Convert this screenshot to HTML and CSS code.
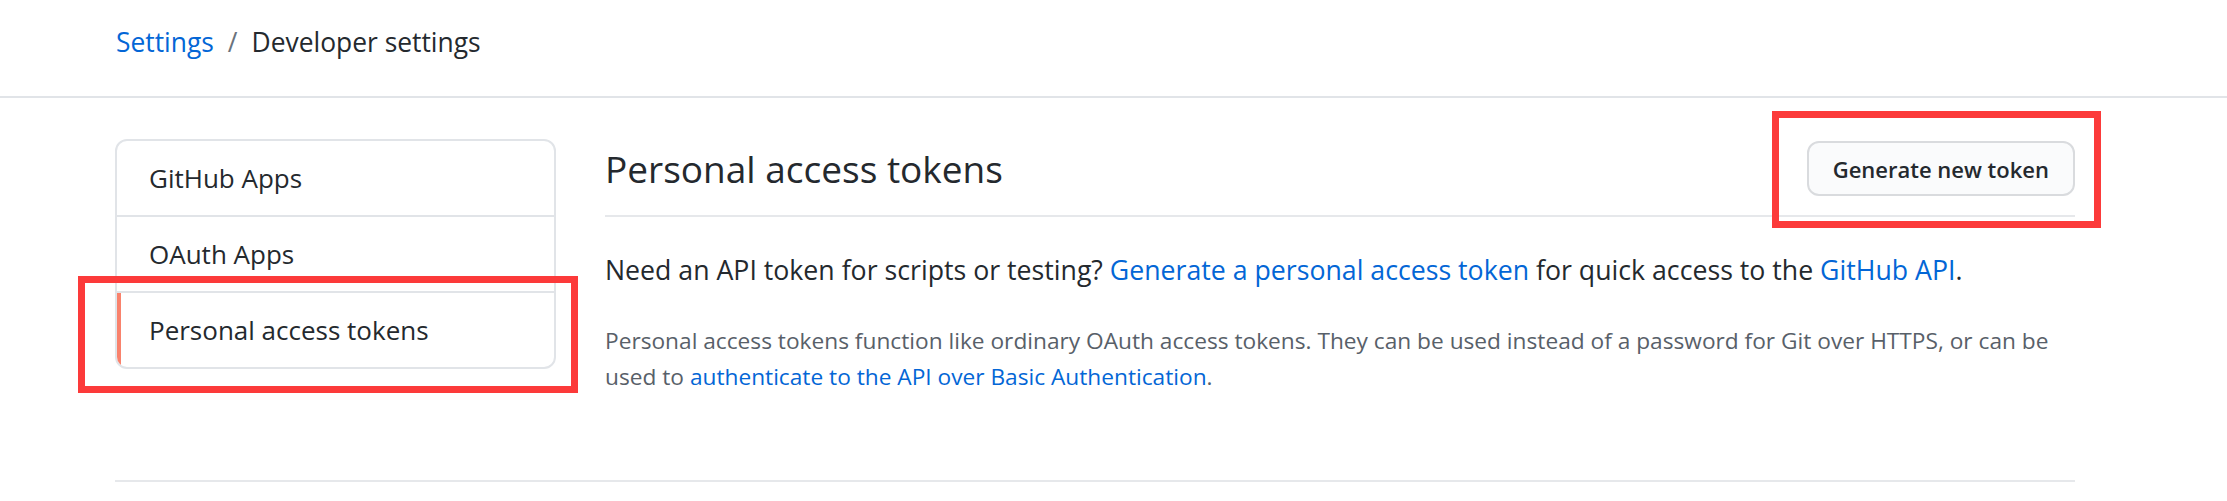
FILE: index.html
```html
<!DOCTYPE html>
<html lang="en">
<head>
<meta charset="utf-8">
<title>Developer settings</title>
<link rel="stylesheet" href="styles.css">
</head>
<body>
  <header class="topbar">
    <div class="container breadcrumb">
      <a class="crumb-link" href="#">Settings</a><span class="crumb-sep">/</span><span class="crumb-current">Developer settings</span>
    </div>
  </header>

  <div class="container layout">
    <nav class="side-menu">
      <a class="menu-item" href="#">GitHub Apps</a>
      <a class="menu-item" href="#">OAuth Apps</a>
      <a class="menu-item selected" href="#">Personal access tokens</a>
    </nav>

    <main class="content">
      <div class="subhead">
        <h2 class="subhead-heading">Personal access tokens</h2>
        <a class="btn" href="#">Generate new token</a>
      </div>
      <p class="lead">Need an API token for scripts or testing? <a class="link" href="#">Generate a personal access token</a> for quick access to the <a class="link" href="#">GitHub API</a>.</p>
      <p class="note">Personal access tokens function like ordinary OAuth access tokens. They can be used instead of a password for Git over HTTPS, or can be used to <a class="link" href="#">authenticate to the API over Basic Authentication</a>.</p>
    </main>
  </div>

  <div class="container footer-rule"></div>

  <div class="annot annot-side"></div>
  <div class="annot annot-btn"></div>
</body>
</html>
```

FILE: styles.css
```css
html, body {
  margin: 0;
  padding: 0;
  background: #ffffff;
}

body {
  position: relative;
  font-family: "Open Sans", "Noto Sans", sans-serif;
  color: #24292e;
  min-height: 501px;
}

a {
  text-decoration: none;
}

.container {
  width: 1960px;
  margin-left: 115px;
}

/* Header / breadcrumb */
.topbar {
  height: 96px;
  border-bottom: 2px solid #e1e4e8;
  box-sizing: content-box;
}

.breadcrumb {
  padding-top: 23px;
  font-size: 26.4px;
  line-height: 39px;
  display: flex;
  align-items: baseline;
}

.crumb-link {
  color: #0366d6;
  margin-left: 1px;
}

.crumb-sep {
  color: #6a737d;
  margin: 0 14px 0 14px;
}

.crumb-current {
  color: #24292e;
}

/* Layout */
.layout {
  display: flex;
  align-items: flex-start;
  gap: 49px;
  padding-top: 41px;
}

.side-menu {
  width: 441px;
  flex: none;
  box-sizing: border-box;
  border: 2px solid #e1e4e8;
  border-radius: 12px;
  overflow: hidden;
  display: flex;
  flex-direction: column;
}

.menu-item {
  position: relative;
  display: block;
  padding: 16px 32px;
  font-size: 26px;
  line-height: 42px;
  color: #24292e;
}

.menu-item + .menu-item {
  border-top: 2px solid #e1e4e8;
}

.menu-item.selected::before {
  content: "";
  position: absolute;
  left: 0;
  top: 0;
  bottom: 0;
  width: 4px;
  background: #f9826c;
}

.content {
  flex: 1;
  min-width: 0;
}

.subhead {
  display: flex;
  align-items: center;
  justify-content: space-between;
  padding-top: 2px;
  padding-bottom: 19px;
  border-bottom: 2px solid #e6e8eb;
}

.subhead-heading {
  margin: 0;
  font-size: 37px;
  font-weight: 400;
  line-height: 55px;
  color: #24292e;
}

.btn {
  display: inline-flex;
  align-items: center;
  box-sizing: border-box;
  height: 55px;
  padding: 0 24px;
  font-size: 22px;
  font-weight: 600;
  color: #24292e;
  background: #fafbfc;
  border: 2px solid #d9dbde;
  border-radius: 12px;
}

.lead {
  margin: 32px 0 0 0;
  font-size: 26.7px;
  line-height: 42px;
  color: #24292e;
}

.note {
  margin: 32px 0 0 0;
  font-size: 22.7px;
  line-height: 36px;
  color: #586069;
}

.link {
  color: #0366d6;
}

.footer-rule {
  margin-top: 85px;
  height: 2px;
  background: #e6e8eb;
}

/* Red annotation frames drawn over the screenshot */
.annot {
  position: absolute;
  box-sizing: border-box;
  border: 7px solid #fc3a3a;
  pointer-events: none;
}

.annot-side {
  left: 78px;
  top: 276px;
  width: 500px;
  height: 117px;
}

.annot-btn {
  left: 1772px;
  top: 111px;
  width: 329px;
  height: 117px;
}
```
